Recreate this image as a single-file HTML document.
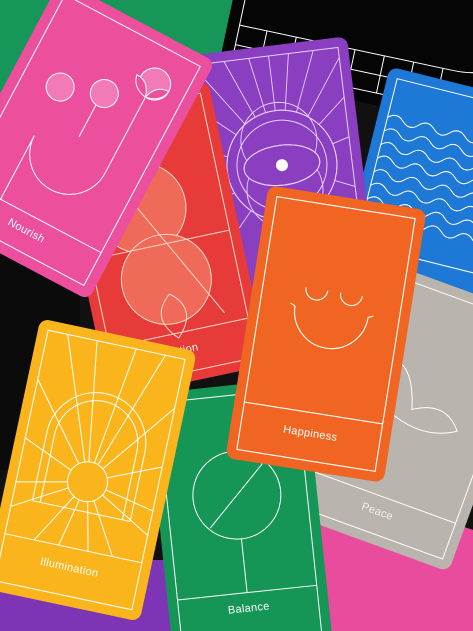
<!DOCTYPE html>
<html><head><meta charset="utf-8"><style>
html,body{margin:0;padding:0;width:473px;height:631px;overflow:hidden}
body{position:relative;background:#111;font-family:"Liberation Sans",sans-serif}
.c{position:absolute;border-radius:9px;overflow:hidden}
.c svg{position:absolute;left:0;top:0}
.lab{position:absolute;left:0;right:0;text-align:center;color:#fff;font-size:11px;letter-spacing:.3px}
.dots{background-image:radial-gradient(rgba(255,255,255,.22) 0.7px,transparent 0.9px);background-size:4px 4px}
</style></head><body>
<div style="position:absolute;left:0;top:0;width:473px;height:631px;overflow:hidden">

<div style="position:absolute;left:0;top:560px;width:240px;height:71px;background:#7d35b5"></div>
<div style="position:absolute;left:300px;top:520px;width:260px;height:160px;background:#e94b9d;transform:rotate(18deg)"></div>
<div style="position:absolute;left:0;top:250px;width:80px;height:220px;background:#0b0b0b"></div>

<div class="c dots" style="left:-60px;top:-170px;width:300px;height:300px;background:#17965a;transform:rotate(28deg)"></div>

<div class="c" style="left:236px;top:-105px;width:300px;height:210px;background:#050505;transform:rotate(12deg)">
<svg width="300" height="210" viewBox="0 0 300 210" fill="none" stroke="#fff" stroke-width="1"><rect x="12" y="12" width="276" height="186"/><path d="M12 160H230M12 180H240"/><path d="M40 160V198M70 160V198M100 160V198M130 160V198M160 160V198M190 160V198M220 160V198"/><path d="M230 160 Q280 160 288 120"/></svg></div>

<div class="c dots" style="left:360px;top:85px;width:180px;height:225px;background:#1e78d6;transform:rotate(14deg)">
<svg width="180" height="225" viewBox="0 0 180 225" fill="none" stroke="#fff" stroke-width="1"><rect x="10" y="10" width="160" height="205"/><path d="M10 180H170"/>
<g><path d="M10 50q8-8 16 0t16 0t16 0t16 0t16 0t16 0t16 0t16 0t16 0t16 0"/><path d="M10 64q8-8 16 0t16 0t16 0t16 0t16 0t16 0t16 0t16 0t16 0t16 0"/><path d="M10 78q8-8 16 0t16 0t16 0t16 0t16 0t16 0t16 0t16 0t16 0t16 0"/><path d="M10 92q8-8 16 0t16 0t16 0t16 0t16 0t16 0t16 0t16 0t16 0t16 0"/><path d="M10 106q8-8 16 0t16 0t16 0t16 0t16 0t16 0t16 0t16 0t16 0t16 0"/><path d="M10 120q8-8 16 0t16 0t16 0t16 0t16 0t16 0t16 0t16 0t16 0t16 0"/><path d="M10 134q8-8 16 0t16 0t16 0t16 0t16 0t16 0t16 0t16 0t16 0t16 0"/><path d="M10 148q8-8 16 0t16 0t16 0t16 0t16 0t16 0t16 0t16 0t16 0t16 0"/></g></svg>
<div class="lab" style="top:190px;left:-60px">Flow</div></div>

<div class="c" style="left:205px;top:45px;width:160px;height:290px;background:#8a3ec0;transform:rotate(-7deg)">
<svg width="160" height="290" viewBox="0 0 160 290" fill="none" stroke="#e8d0ff" stroke-width="1"><rect x="10" y="10" width="140" height="270"/>
<g stroke-width=".9"><path d="M80 120L10 20M80 120L35 10M80 120L60 10M80 120L80 10M80 120L100 10M80 120L125 10M80 120L150 20M80 120L150 60M80 120L150 100M80 120L10 60M80 120L10 100M80 120L10 150M80 120L150 150M80 120L10 200M80 120L150 200"/></g>
<circle cx="80" cy="120" r="55" fill="#8a3ec0"/><circle cx="80" cy="120" r="55"/><circle cx="80" cy="120" r="45"/><circle cx="80" cy="95" r="38"/><circle cx="80" cy="145" r="38"/>
<ellipse cx="80" cy="120" rx="38" ry="20" fill="#8a3ec0"/><ellipse cx="80" cy="120" rx="38" ry="20"/><circle cx="80" cy="120" r="6" fill="#fff" stroke="none"/></svg></div>

<div class="c dots" style="left:78px;top:95px;width:162px;height:290px;background:#e63b39;transform:rotate(-12deg)">
<svg width="162" height="290" viewBox="0 0 162 290" fill="none" stroke="#ffd9c8" stroke-width="1"><rect x="10" y="10" width="142" height="270"/><path d="M10 240H152"/>
<circle cx="70" cy="110" r="45" fill="#f06a5a"/><circle cx="80" cy="185" r="45" fill="#f06a5a"/><path d="M10 150H152M30 40L130 230"/><path d="M80 200q-25 20 0 45q25-25 0-45z"/></svg>
<div class="lab" style="top:252px">Action</div></div>

<div class="c" style="left:-13px;top:5px;width:175px;height:270px;background:#ec4f9d;transform:rotate(28deg)">
<svg width="175" height="270" viewBox="0 0 175 270" fill="none" stroke="#fff" stroke-width="1"><rect x="11" y="11" width="153" height="248"/><path d="M11 222H164"/>
<path d="M50 222V150a40 40 0 0 0 80 0" /><path d="M130 150V65"/>
<path d="M90 130V80"/>
<circle cx="132" cy="48" r="16" fill="#f27ab6"/><circle cx="50" cy="95" r="14" fill="#f27ab6"/><circle cx="92" cy="80" r="14" fill="#f27ab6"/>
<path d="M130 64q-16-3-18-16q14 0 18 16zM130 64q16-3 18-16q-14 0-18 16z" fill="#ec4f9d"/></svg>
<div class="lab" style="top:232px">Nourish</div></div>

<div class="c dots" style="left:325px;top:280px;width:175px;height:270px;background:#b9b4ae;transform:rotate(20deg)">
<svg width="175" height="270" viewBox="0 0 175 270" fill="none" stroke="#fff" stroke-width="1"><rect x="10" y="10" width="155" height="250"/><path d="M10 222H165"/><path d="M40 90q30-10 45 40q30-20 50 5q-30 20-70 5z"/></svg>
<div class="lab" style="top:232px;color:#f2f0ec">Peace</div></div>

<div class="c dots" style="left:160px;top:385px;width:160px;height:280px;background:#169656;transform:rotate(-6deg)">
<svg width="160" height="280" viewBox="0 0 160 280" fill="none" stroke="#fff" stroke-width="1"><rect x="10" y="10" width="140" height="260"/><path d="M10 208H150"/>
<circle cx="80" cy="110" r="44" fill="#169656"/><path d="M50 140L110 80"/><path d="M80 154V208"/></svg>
<div class="lab" style="top:218px">Balance</div></div>

<div class="c" style="left:246px;top:196px;width:160px;height:276px;background:#f06522;transform:rotate(9deg)">
<svg width="160" height="276" viewBox="0 0 160 276" fill="none" stroke="#fff" stroke-width="1.1"><rect x="10" y="10" width="140" height="256"/><path d="M10 218H150"/>
<path d="M53 95a11 11 0 0 0 22 0M88 95a11 11 0 0 0 22 0"/><path d="M45 115a37 37 0 0 0 74 0"/><path d="M40 113q5 2 5 2M124 113q-5 2-5 2"/></svg>
<div class="lab" style="top:233px">Happiness</div></div>

<div class="c" style="left:10px;top:332px;width:160px;height:276px;background:#fbb51c;transform:rotate(12deg)">
<svg width="160" height="276" viewBox="0 0 160 276" fill="none" stroke="#fff" stroke-width="1"><rect x="10" y="10" width="140" height="256"/><path d="M10 218H150"/>
<path d="M80 150L30 10M80 150L60 10M80 150L100 10M80 150L130 10M80 150L10 60M80 150L150 60M80 150L10 120M80 150L150 120M80 150L10 190M80 150L150 190M80 150L40 218M80 150L65 218M80 150L95 218M80 150L120 218M80 150L10 165M80 150L150 165"/>
<path d="M30 180V110a50 50 0 0 1 100 0V180M38 180V110a42 42 0 0 1 84 0V180M30 180H130"/>
<circle cx="80" cy="150" r="20" fill="#fbb51c"/></svg>
<div class="lab" style="top:232px">Illumination</div></div>

</div>
</body></html>
